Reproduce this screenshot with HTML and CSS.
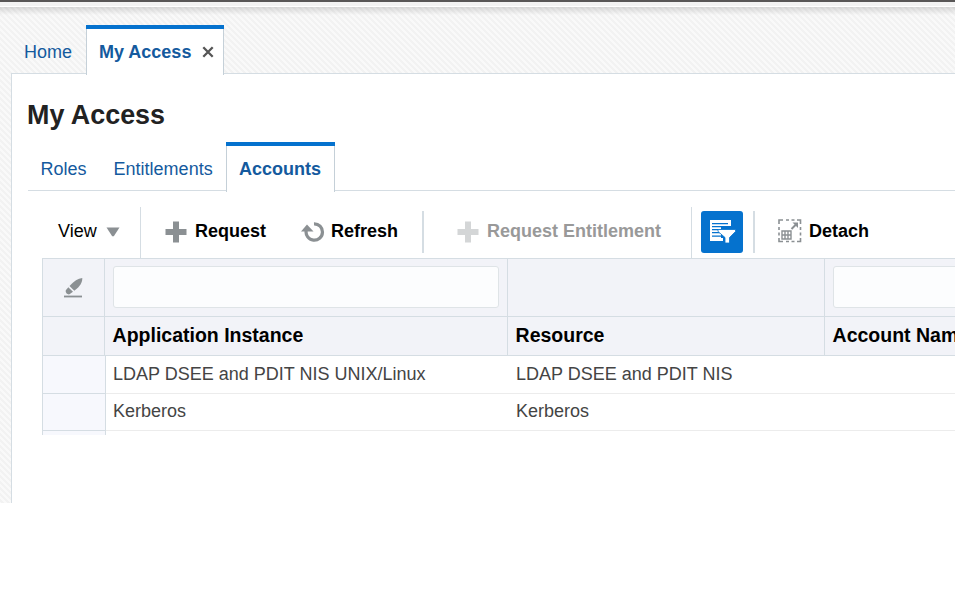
FILE: index.html
```html
<!DOCTYPE html>
<html lang="en">
<head>
<meta charset="utf-8">
<title>My Access</title>
<link rel="stylesheet" href="styles.css">
</head>
<body>
<div class="page">
  <header class="topbar"></header>
  <nav class="tabs main-tabs">
    <a class="tab">Home</a>
    <a class="tab active">My Access
      <svg class="close" width="12" height="12" viewBox="0 0 12 12"><path d="M1.300 1.300 10.700 10.700M10.700 1.300 1.300 10.700" stroke="#555" stroke-width="2.300"/></svg>
    </a>
  </nav>
  <main class="panel">
    <h1>My Access</h1>
    <nav class="tabs sub-tabs">
      <a class="tab roles">Roles</a>
      <a class="tab entitlements">Entitlements</a>
      <a class="tab active">Accounts</a>
    </nav>
    <div class="toolbar">
      <div class="tool view">View <svg width="14" height="10" viewBox="0 0 14 10"><path d="M.5 .5H13.5L7.8 9.2H6.2Z" fill="#8b9093"/></svg></div>
      <div class="tool request"><svg width="22" height="22" viewBox="0 0 22 22"><path d="M8 .5H14V8H21.500V14H14V21.500H8V14H.5V8H8Z" fill="#8b9093"/></svg>Request</div>
      <div class="tool refresh"><svg width="24" height="20" viewBox="0 0 24 20"><path d="M13 1.800A8.200 8.200 0 1 1 5.200 8.500" fill="none" stroke="#8b9093" stroke-width="3.200"/><path d="M0 9.500 6 2.500 12.500 9.500Z" fill="#8b9093"/></svg>Refresh</div>
      <span class="divider"></span>
      <div class="tool request-ent"><svg width="22" height="22" viewBox="0 0 22 22"><path d="M8 .5H14V8H21.500V14H14V21.500H8V14H.5V8H8Z" fill="#d4d6d7"/></svg>Request Entitlement</div>
      <div class="tool filter"><span class="filter-button"><svg width="42" height="42" viewBox="0 0 42 42"><path d="M9 9H30V15H20V30H9Z" fill="#fff"/><path d="M11 12H27V13.200H11ZM11 15H20V16.200H11ZM11 18H20V19.200H11ZM11 21H20V22.200H11ZM11 24.500H20V25.700H11Z" fill="#0572ce"/><path d="M20 27H22V30H20Z" fill="#fff"/><path d="M17 18.500H34.500V20.500L28.500 26.500V32H24V26.500L17 20.500Z" fill="#fff" stroke="#0572ce" stroke-width=".8"/></svg></span></div>
      <span class="divider"></span>
      <div class="tool detach"><svg width="24" height="24" viewBox="0 0 24 24"><path d="M1 5V1H5M8 1H11M13.500 1H16.500M19 1H22.500V5M22.500 8V11M22.500 13.500V16.500M22.500 19V22.500H19M16.500 22.500H13.500M11 22.500H8M5 22.500H1V19M1 16.500V13.500M1 11V8" fill="none" stroke="#8b9093" stroke-width="1.600"/><path d="M4 12H13V20H4ZM4 16H13M7 12V20M10 12V20" fill="none" stroke="#8b9093" stroke-width="1.400"/><path d="M13.500 10 18 5.500" fill="none" stroke="#8b9093" stroke-width="2"/><path d="M14.500 3.500H20V9Z" fill="#8b9093"/></svg>Detach</div>
    </div>
    <div class="table">
      <div class="row filters">
        <div class="cell handle"><svg width="19" height="20" viewBox="0 0 19 20"><path d="M0 18.500H18" stroke="#8b9093" stroke-width="1.800"/><path d="M18.300 0C18.300 4.500 16.500 8 10.300 12.800L5.500 8C10 3 14 .3 18.300 0Z" fill="#8b9093"/><path d="M4.300 9.200 9 13.800 5.500 16.300C3.500 16.800 1.200 14.800 1.800 12.200Z" fill="#8b9093"/></svg></div>
        <div class="cell"><input type="text" aria-label="Application Instance"></div>
        <div class="cell"></div>
        <div class="cell"><input type="text" aria-label="Account Name"></div>
      </div>
      <div class="row heads">
        <div class="cell handle"></div>
        <div class="cell">Application Instance</div>
        <div class="cell">Resource</div>
        <div class="cell">Account Name</div>
      </div>
      <div class="row data first">
        <div class="cell handle"></div>
        <div class="cell">LDAP DSEE and PDIT NIS UNIX/Linux</div>
        <div class="cell">LDAP DSEE and PDIT NIS</div>
        <div class="cell"></div>
      </div>
      <div class="row data">
        <div class="cell handle"></div>
        <div class="cell">Kerberos</div>
        <div class="cell">Kerberos</div>
        <div class="cell"></div>
      </div>
      <div class="row data last">
        <div class="cell handle"></div>
      </div>
    </div>
  </main>
</div>
</body>
</html>
```
FILE: styles.css
```css
* { box-sizing: border-box; }
body {
  margin: 0;
  overflow: hidden;
  background: #fff;
  font: 18px/22px "Liberation Sans", Arial, sans-serif;
  color: #000;
}
svg { display: block; flex: none; }
.page {
  display: flex;
  flex-direction: column;
  height: 503px;
  overflow: hidden;
  background:
    linear-gradient(rgba(0,0,0,.13), rgba(0,0,0,0)) 0 7px / 100% 8px no-repeat,
    linear-gradient(45deg, #f9f9f9 25%, #f2f2f2 25% 50%, #f9f9f9 50% 75%, #f2f2f2 75%) 0 0 / 6px 6px;
}
.topbar {
  flex: none;
  height: 7px;
  border-top: 2px solid #595757;
  border-bottom: 1px solid #fff;
  background: #f3f3f3;
}
.tabs { display: flex; flex: none; color: #145a9e; }
.tab { display: flex; align-items: center; white-space: nowrap; }
.tab.active {
  position: relative;
  background: #fff;
  border: 1px solid #c5d0d8;
  border-top: 0;
  border-bottom: 0;
  font-weight: bold;
}
.tab.active::before {
  content: "";
  position: absolute;
  inset: 0 -1px auto;
  height: 4px;
  background: #0572ce;
}
.main-tabs { height: 67px; padding: 18px 0 0 24px; z-index: 1; }
.main-tabs .tab { height: 49px; padding-top: 4px; width: 62px; }
.main-tabs .active { width: 138px; height: 50px; padding: 4px 9px 0 12px; justify-content: space-between; }
.close { margin-top: -1px; }
.panel {
  flex: 1;
  margin: -1px 0 0 11px;
  border: 1px solid #d5dde3;
  border-width: 1px 0 0 1px;
  background: #fff;
  overflow: hidden;
}
h1 { margin: 25px 0 0 15px; font-size: 26.9px; line-height: 32px; color: #222; height: 43px; }
.sub-tabs {
  margin-left: 16px;
  height: 49px;
  border-bottom: 1px solid #d5dde3;
  border-top-left-radius: 3px;
}
.sub-tabs .tab { height: 49px; padding-top: 4px; }
.sub-tabs .roles { width: 73px; padding-left: 12.600px; }
.sub-tabs .entitlements { width: 125px; padding-left: 12.600px; }
.sub-tabs .active { width: 109px; height: 50px; padding: 4px 0 0 12px; }
.toolbar { display: flex; height: 67px; margin-left: 30px; padding-top: 16px; }
.tool { display: flex; align-items: center; height: 51px; padding-bottom: 3px; font-weight: bold; white-space: nowrap; }
.tool svg { position: relative; top: 1px; }
.view { width: 99px; padding-left: 16px; font-weight: normal; gap: 9px; border-right: 1px solid #d5dde3; }
.request { width: 160px; padding-left: 24px; gap: 8px; }
.refresh { width: 121px; gap: 6px; }
.divider { width: 2px; height: 42px; margin-top: 4px; background: #d5dde3; }
.request-ent { width: 268px; padding-left: 33px; gap: 8px; color: #999; border-right: 1px solid #d5dde3; }
.filter { width: 61px; padding-left: 9px; align-items: flex-start; padding-top: 4px; }
.filter-button { width: 42px; height: 42px; border-radius: 3px; background: #0572ce; }
.filter-button svg { top: 0; }
.detach { padding-left: 23px; gap: 7px; }
.detach svg { top: 0; }
.table { margin-left: 30px; border-top: 1px solid #d5dde3; border-left: 1px solid #d5dde3; height: 177px; overflow: hidden; }
.row { display: grid; width: 1100px; grid-template-columns: 62px 403px 317px 1fr; }
.cell { padding: 0 8px; border-bottom: 1px solid #d5dde3; border-right: 1px solid #d5dde3; white-space: nowrap; overflow: hidden; }
.filters, .heads { background: #f2f3f8; }
.filters .cell { height: 58px; padding-top: 7px; }
.filters .handle { padding: 19px 0 0 21px; }
.filters input { display: block; width: 386px; height: 42px; border: 1px solid #dfe4e7; border-radius: 3px; background: #fcfdfe; }
.heads { font-size: 19.500px; font-weight: bold; }
.heads .cell { height: 39px; line-height: 37px; padding-left: 7.600px; }
.data { grid-template-columns: 63px 402px 317px 1fr; color: #444; }
.data .cell { height: 37px; line-height: 35px; border-right: 0; border-bottom-color: #ececec; padding-left: 7px; }
.data .cell:nth-child(3) { padding-left: 8px; }
.data .handle { background: #f7f8fd; border-right: 1px solid #d5dde3; border-bottom-color: #d5dde3; }
.data.first .cell { height: 38px; line-height: 36px; }
```
